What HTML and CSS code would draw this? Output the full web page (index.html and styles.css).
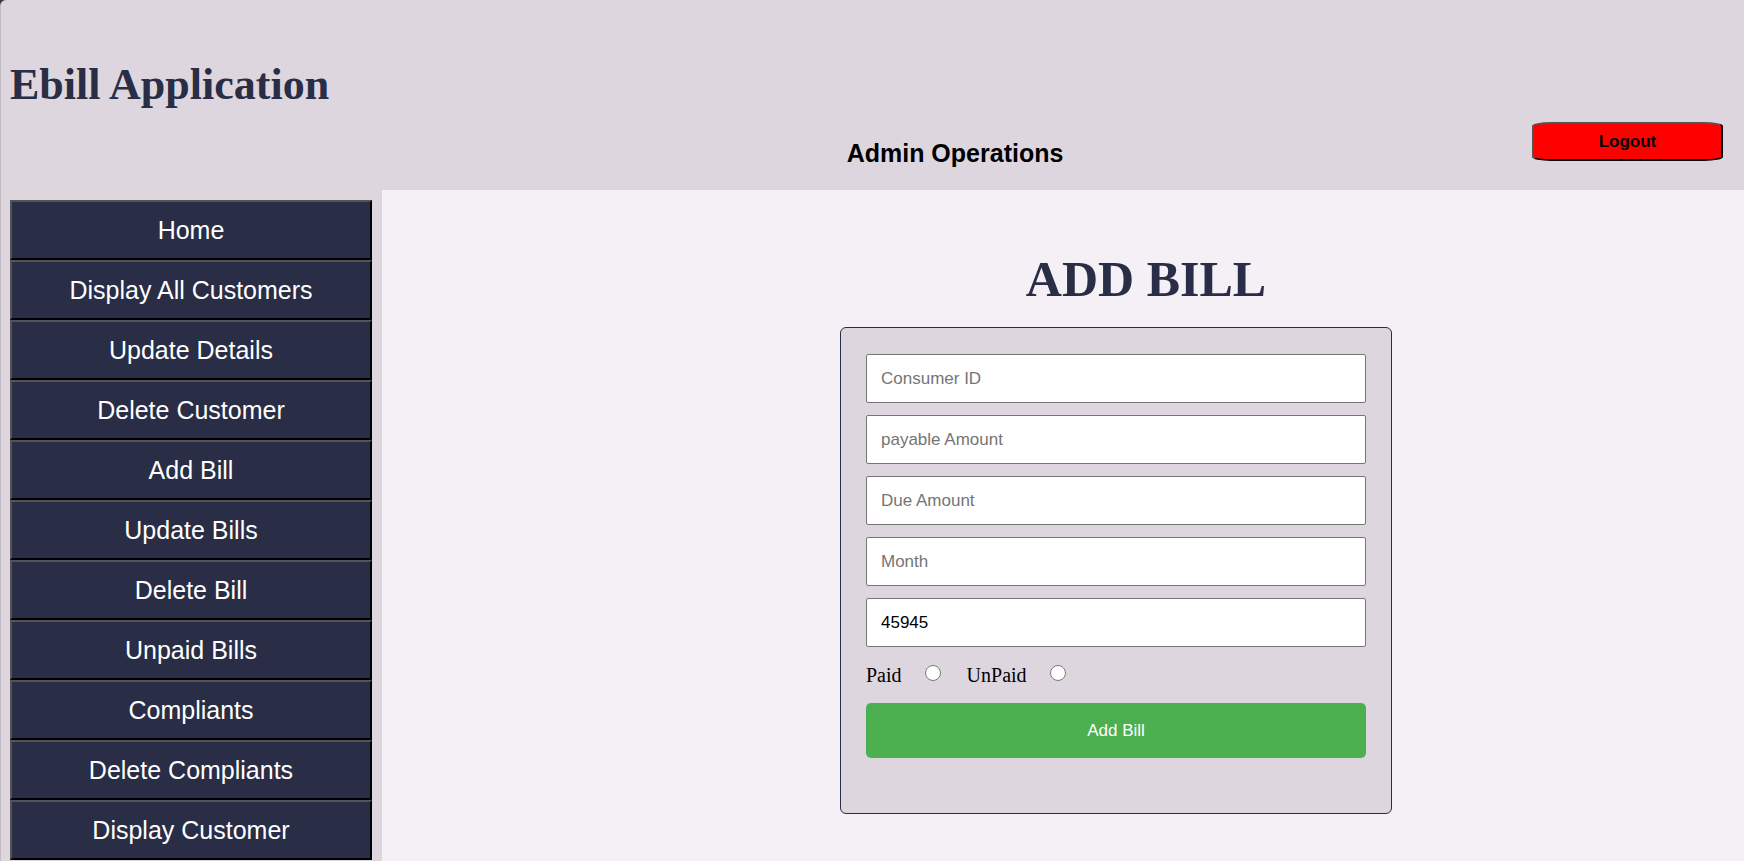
FILE: index.html
```html
<!DOCTYPE html>
<html lang="en">
<head>
<meta charset="utf-8">
<title>Ebill Application</title>
<link rel="stylesheet" href="styles.css">
</head>
<body>
<div class="app">
  <header class="header">
    <h1 class="brand">Ebill Application</h1>
    <h2 class="subtitle">Admin Operations</h2>
    <button class="logout" type="button">Logout</button>
  </header>
  <div class="body">
    <nav class="sidebar">
      <button class="nav-button" type="button">Home</button>
      <button class="nav-button" type="button">Display All Customers</button>
      <button class="nav-button" type="button">Update Details</button>
      <button class="nav-button" type="button">Delete Customer</button>
      <button class="nav-button" type="button">Add Bill</button>
      <button class="nav-button" type="button">Update Bills</button>
      <button class="nav-button" type="button">Delete Bill</button>
      <button class="nav-button" type="button">Unpaid Bills</button>
      <button class="nav-button" type="button">Compliants</button>
      <button class="nav-button" type="button">Delete Compliants</button>
      <button class="nav-button" type="button">Display Customer</button>
    </nav>
    <main class="main">
      <section class="panel">
        <h1 class="title">ADD BILL</h1>
        <form class="card">
          <div class="fields">
            <input class="field" type="text" placeholder="Consumer ID" aria-label="Consumer ID">
            <input class="field" type="text" placeholder="payable Amount" aria-label="payable Amount">
            <input class="field" type="text" placeholder="Due Amount" aria-label="Due Amount">
            <input class="field" type="text" placeholder="Month" aria-label="Month">
            <input class="field" type="text" value="45945" aria-label="Bill number">
          </div>
          <div class="status">
            <label class="option" for="paid">Paid</label>
            <input class="radio" type="radio" id="paid" name="status">
            <label class="option" for="unpaid">UnPaid</label>
            <input class="radio" type="radio" id="unpaid" name="status">
          </div>
          <button class="submit" type="submit">Add Bill</button>
        </form>
      </section>
    </main>
  </div>
</div>
</body>
</html>
```
FILE: styles.css
```css
* {
  box-sizing: border-box;
}

html {
  background: #3a3a3a;
}

body {
  margin: 0;
  font-family: "Liberation Serif", "Times New Roman", serif;
  font-size: 20px;
}

.app {
  display: flex;
  flex-direction: column;
  min-height: 100vh;
  background: #ddd6de;
  border-left: 1px solid #c3bdc3;
  border-top-left-radius: 6px;
  overflow: hidden;
}

.header {
  display: grid;
  grid-template-columns: 377px 1fr 191px;
  align-items: start;
  row-gap: 11px;
  padding: 59px 21px 23px 0;
}

.brand {
  grid-column: 1 / -1;
  margin: 0;
  padding-left: 9px;
  font-size: 44px;
  line-height: 52px;
  color: #292d46;
}

.subtitle {
  grid-column: 2;
  margin: 0;
  padding-top: 17px;
  font-family: "Liberation Sans", Arial, sans-serif;
  font-size: 25px;
  line-height: 28px;
  text-align: center;
  color: #000;
}

.logout {
  height: 39px;
  padding: 0;
  border: 2px outset #000;
  border-radius: 10%;
  background: #f00;
  font-family: "Liberation Sans", Arial, sans-serif;
  font-size: 17px;
  font-weight: bold;
  color: #000;
}

.body {
  display: flex;
  flex: 1;
}

.sidebar {
  display: flex;
  flex-direction: column;
  flex: none;
  width: 381px;
  padding: 10px 10px 0 9px;
}

.nav-button {
  height: 60px;
  padding: 0;
  border: 2px outset #000;
  background: #292d46;
  font-family: "Liberation Sans", Arial, sans-serif;
  font-size: 25px;
  color: #fff;
}

.main {
  display: grid;
  flex: 1;
  grid-template-columns: 458fr 552px 352fr;
  align-items: start;
  padding: 60px 0 40px;
  background: #f5f0f6;
}

.panel {
  grid-column: 2;
}

.title {
  margin: 0 0 19px;
  padding-left: 60px;
  font-size: 50px;
  line-height: 58px;
  text-align: center;
  color: #292d46;
}

.card {
  padding: 26px 25px 55px;
  border: 1px solid #292d46;
  border-radius: 6px;
  background: #ddd6de;
}

.fields {
  display: grid;
  gap: 12px;
}

.field {
  width: 100%;
  height: 49px;
  padding: 0 14px;
  border: 1px solid #767676;
  border-radius: 2px;
  background: #fff;
  font-family: "Liberation Sans", Arial, sans-serif;
  font-size: 17px;
  color: #000;
}

.field::placeholder {
  color: #757575;
}

.status {
  display: flex;
  align-items: center;
  height: 56px;
}

.option {
  line-height: 24px;
}

.radio {
  width: 16px;
  height: 16px;
  margin: 0 26px 4px 23px;
}

.submit {
  display: block;
  width: 100%;
  height: 55px;
  padding: 0;
  border: 0;
  border-radius: 5px;
  background: #4caf50;
  font-family: "Liberation Sans", Arial, sans-serif;
  font-size: 17px;
  color: #fff;
}
```
